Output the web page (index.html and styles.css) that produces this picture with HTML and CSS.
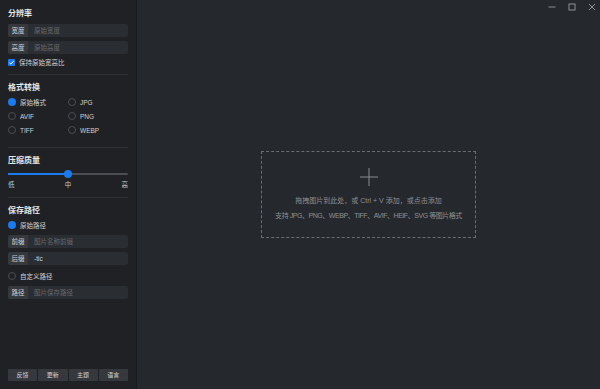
FILE: index.html
```html
<!DOCTYPE html>
<html lang="zh">
<head>
  <meta charset="UTF-8" />
  <title>图片转换</title>
  <link rel="stylesheet" href="styles.css">
</head>
<body>
  <div class="app">
    <aside class="sidebar">
      <div class="panel size">
        <h2>分辨率</h2>
        <div class="field"><span class="tag">宽度</span><span class="input ph">原始宽度</span></div>
        <div class="field"><span class="tag">高度</span><span class="input ph">原始高度</span></div>
        <label class="check"><span class="box">
          <svg viewBox="0 0 10 10" width="7" height="7"><path d="M2 5.2 L4.2 7.3 L8.2 2.8" fill="none" stroke="#fff" stroke-width="1.4"/></svg>
        </span>保持原始宽高比</label>
      </div>

      <div class="panel">
        <h2>格式转换</h2>
        <div class="radios">
          <label class="radio on"><span class="dot"></span>原始格式</label>
          <label class="radio"><span class="dot"></span>JPG</label>
          <label class="radio"><span class="dot"></span>AVIF</label>
          <label class="radio"><span class="dot"></span>PNG</label>
          <label class="radio"><span class="dot"></span>TIFF</label>
          <label class="radio"><span class="dot"></span>WEBP</label>
        </div>
      </div>

      <div class="panel">
        <h2>压缩质量</h2>
        <div class="slider">
          <div class="track"><div class="fill" style="width: 50%"></div></div>
          <span class="thumb" style="left: 50%"></span>
        </div>
        <div class="scale"><span>低</span><span>中</span><span>高</span></div>
      </div>

      <div class="panel path">
        <h2>保存路径</h2>
        <label class="radio on"><span class="dot"></span>原始路径</label>
        <div class="field"><span class="tag">前缀</span><span class="input ph">图片名称前缀</span></div>
        <div class="field"><span class="tag">后缀</span><span class="input">-tic</span></div>
        <label class="radio"><span class="dot"></span>自定义路径</label>
        <div class="field"><span class="tag">路径</span><span class="input ph">图片保存路径</span></div>
      </div>

      <div class="actions">
        <button>反馈</button>
        <button>更新</button>
        <button>主题</button>
        <button>语言</button>
      </div>
    </aside>

    <main class="main">
      <div class="titlebar">
        <svg viewBox="0 0 10 10" width="10" height="10"><path d="M1.5 5 H8.5" stroke="#9a9da2" stroke-width="0.9"/></svg>
        <svg viewBox="0 0 10 10" width="10" height="10"><rect x="2" y="2" width="6" height="6" fill="none" stroke="#9a9da2" stroke-width="0.9"/></svg>
        <svg viewBox="0 0 10 10" width="10" height="10"><path d="M2 2 L8 8 M8 2 L2 8" stroke="#9a9da2" stroke-width="0.9"/></svg>
      </div>
      <div class="stage">
        <div class="drop">
          <svg class="plus" viewBox="0 0 18 18" width="18" height="18"><path d="M9 0 V18 M0 9 H18" stroke="#8a8d92" stroke-width="1"/></svg>
          <p>拖拽图片到此处，或 Ctrl + V 添加，或点击添加</p>
          <p class="formats">支持 JPG、PNG、WEBP、TIFF、AVIF、HEIF、SVG 等图片格式</p>
        </div>
      </div>
    </main>
  </div>
</body>
</html>
```

FILE: styles.css
```css
* {
  box-sizing: border-box;
}

html, body {
  margin: 0;
  padding: 0;
  overflow: hidden;
}

body {
  font-family: 'Liberation Sans', 'Noto Sans CJK SC', sans-serif;
  background: #25282c;
  color: #c9cbce;
  font-size: 6.5px;
  width: 600px;
  height: 389px;
}

.app {
  display: flex;
  height: 389px;
}

.sidebar {
  width: 137px;
  background: #1f2124;
  border-right: 1px solid #181a1d;
  padding: 1px 8px 0;
  display: flex;
  flex-direction: column;
}

.panel {
  border-bottom: 1px solid #2f3236;
  padding: 5px 0 8px;
}

h2 {
  margin: 2px 0 4px;
  font-size: 8px;
  font-weight: bold;
  color: #e4e5e7;
  line-height: 11px;
}

.field {
  display: flex;
  height: 13px;
  border-radius: 2px;
  overflow: hidden;
  background: #2a2d31;
}

.tag {
  width: 20px;
  background: #35383d;
  color: #d2d4d7;
  display: flex;
  align-items: center;
  justify-content: center;
  line-height: 13px;
}

.input {
  flex: 1;
  padding-left: 6px;
  line-height: 13px;
  color: #d8dadd;
}

.input.ph {
  color: #676a70;
}

/* resolution */
.size .field {
  margin-bottom: 4px;
}

.size h2 {
  margin-bottom: 5px;
}

.check {
  display: flex;
  align-items: center;
  gap: 4px;
  height: 8px;
  color: #d2d4d7;
}

.box {
  width: 7px;
  height: 7px;
  border-radius: 1px;
  background: #1a7bf0;
  display: flex;
  align-items: center;
  justify-content: center;
}

.radios {
  display: grid;
  grid-template-columns: 60px 1fr;
  row-gap: 4px;
  margin-bottom: 4px;
}

.radio {
  display: flex;
  align-items: center;
  gap: 4px;
  height: 10px;
  color: #cfd1d4;
}

.dot {
  width: 8px;
  height: 8px;
  border-radius: 50%;
  border: 1px solid #4a4d52;
}

.radio.on .dot {
  border: none;
  background: #1a7bf0;
}

.slider {
  position: relative;
  height: 8px;
  display: flex;
  align-items: center;
  margin-top: 1.5px;
}

.track {
  flex: 1;
  height: 2px;
  background: #4a4d52;
  border-radius: 1px;
}

.fill {
  height: 2px;
  background: #1a7bf0;
}

.thumb {
  position: absolute;
  top: 0;
  width: 8px;
  height: 8px;
  margin-left: -4px;
  border-radius: 50%;
  background: #1a7bf0;
}

.scale {
  display: flex;
  justify-content: space-between;
  margin-top: 2px;
  line-height: 9px;
  color: #c9cbce;
}

/* save path */
.path {
  border-bottom: none;
}

.path .field {
  margin-top: 4px;
}

.path .field + .field {
  margin-top: 4px;
}

.path .field + .radio {
  margin-top: 6px;
}

.path .radio + .field {
  margin-top: 5px;
}

.actions {
  margin-top: auto;
  margin-bottom: 8px;
  display: grid;
  grid-template-columns: repeat(4, 1fr);
  gap: 1px;
}

button {
  height: 12px;
  padding: 0;
  border: none;
  border-radius: 1px;
  background: #35383d;
  color: #d2d4d7;
  font-family: inherit;
  font-size: 6px;
  line-height: 12px;
}

.main {
  flex: 1;
  display: flex;
  flex-direction: column;
}

.titlebar {
  height: 14px;
  display: flex;
  justify-content: flex-end;
  align-items: center;
  gap: 10px;
  padding-right: 3px;
}

.stage {
  flex: 1;
  display: flex;
  justify-content: center;
  padding-top: 137px;
}

.drop {
  width: 215px;
  height: 87px;
  border: 1px dashed #6a6d72;
  display: flex;
  flex-direction: column;
  align-items: center;
  padding-top: 16px;
}

.plus {
  margin-bottom: 10px;
}

.drop p {
  margin: 0 0 6px;
  font-size: 7px;
  line-height: 9px;
  color: #8d9095;
}

.drop .formats {
  letter-spacing: -0.45px;
}
```
